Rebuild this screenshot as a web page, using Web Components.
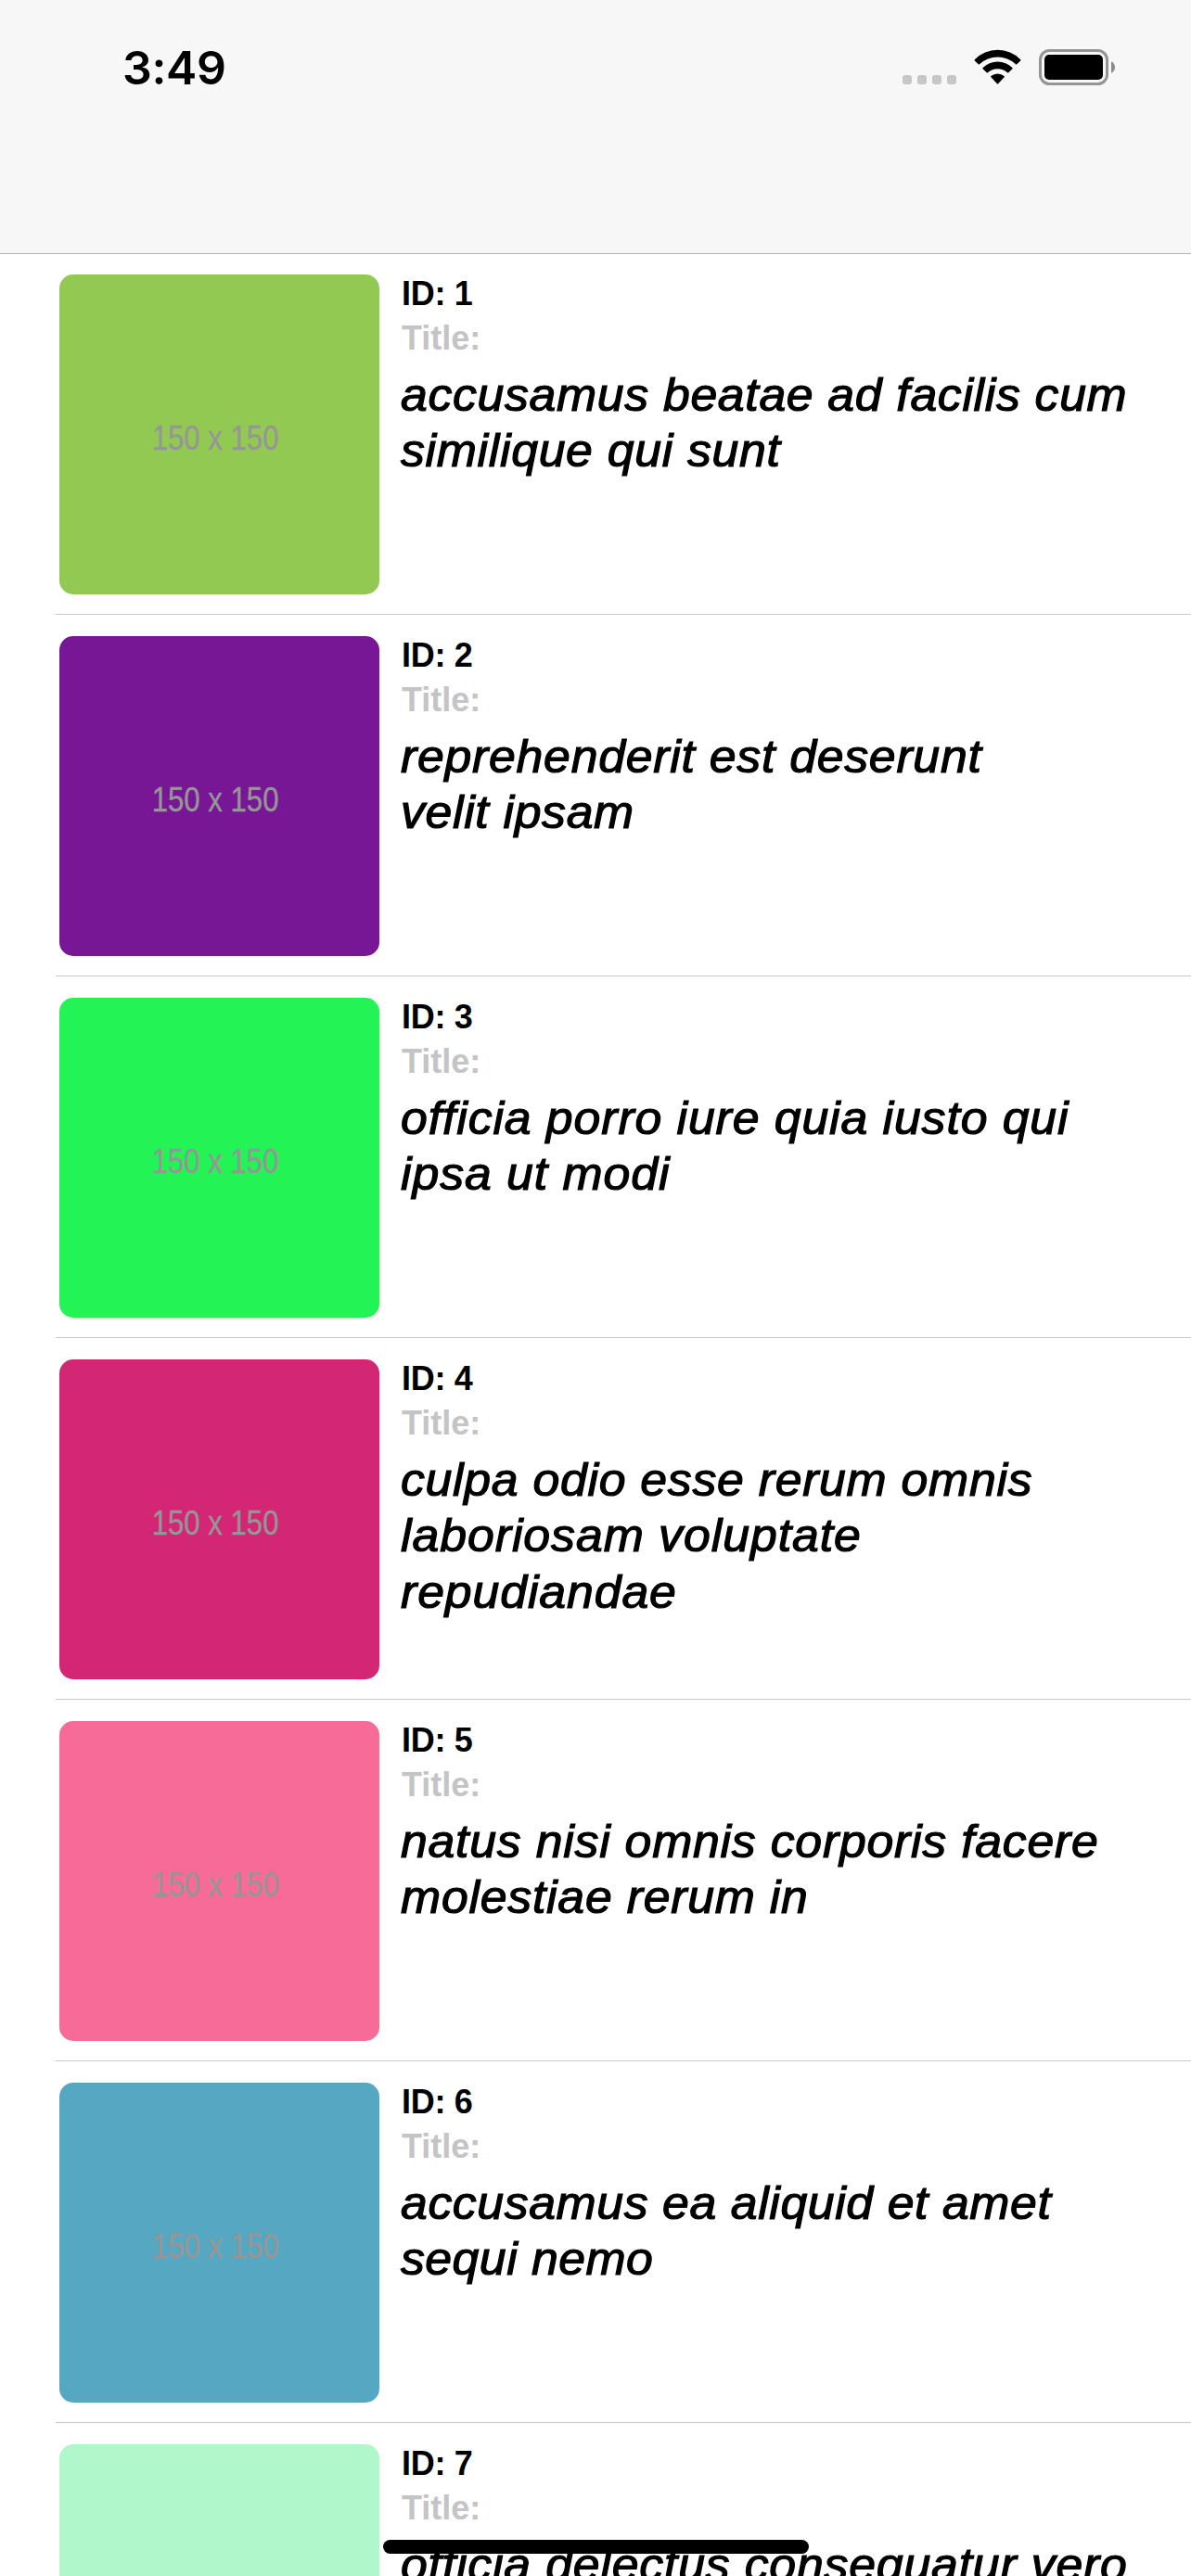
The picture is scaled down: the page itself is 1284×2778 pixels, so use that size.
<!DOCTYPE html>
<html lang="en">
<head>
<meta charset="utf-8">
<title>Photos</title>
<style>
html,body{margin:0;padding:0;background:#fff}
body{width:1284px;height:2778px;overflow:hidden}
</style>
</head>
<body>
<photo-app></photo-app>
<script>
const ctx = document.createElement('canvas').getContext('2d');

/* One line of text whose ink spans from the line's origin to `span` pixels.
   `stretch` widens the glyphs before the rest is made up with letter spacing. */
class FitLine extends HTMLElement {
  connectedCallback() {
    const root = this.attachShadow({mode: 'open'});
    root.innerHTML = `<style>:host{display:block;white-space:nowrap;transform-origin:0 0;font-kerning:normal;font-variant-ligatures:no-common-ligatures}</style><slot></slot>`;
    const text = this.textContent, cs = getComputedStyle(this);
    const stretch = +(this.getAttribute('stretch') || 1);
    ctx.font = `${cs.fontStyle} ${cs.fontWeight} ${cs.fontSize} ${cs.fontFamily}`;
    const right = ctx.measureText(text).actualBoundingBoxRight;
    this.style.letterSpacing = ((this.getAttribute('span') / stretch - right) / (text.length - 1)).toFixed(3) + 'px';
    if (stretch !== 1) this.style.transform = `scaleX(${stretch})`;
  }
}
customElements.define('fit-line', FitLine);

class SignalDots extends HTMLElement {
  connectedCallback() {
    this.attachShadow({mode: 'open'}).innerHTML = `<style>
      :host{display:flex;gap:6px;margin-top:28px}
      i{width:10px;height:10px;border-radius:3px;background:#c6c6c6}
    </style><i></i><i></i><i></i><i></i>`;
  }
}
customElements.define('signal-dots', SignalDots);

class WifiIcon extends HTMLElement {
  connectedCallback() {
    this.attachShadow({mode: 'open'}).innerHTML = `<style>:host,svg{display:block}</style>
    <svg width="51" height="39" viewBox="0 0 51 39">
      <path d="M.8 11.2A34.5 34.5 0 0 1 50.2 11.2Q50.8 11.8 50.2 12.4L46.2 16.3Q45.6 16.9 45 16.3A28.6 28.6 0 0 0 6 16.3Q5.4 16.9 4.8 16.3L.8 12.4Q.2 11.8 .8 11.2Z"/>
      <path d="M9.6 20A23 23 0 0 1 41.4 20Q42 20.6 41.4 21.2L37.3 25.2Q36.7 25.8 36.1 25.2A16.2 16.2 0 0 0 14.9 25.2Q14.3 25.8 13.7 25.2L9.6 21.2Q9 20.6 9.6 20Z"/>
      <path d="M18.4 29.1A11 11 0 0 1 32.6 29.1Q33.2 29.7 32.6 30.3L26.1 37.3Q25.5 37.9 24.9 37.3L18.4 30.3Q17.8 29.7 18.4 29.1Z"/>
    </svg>`;
  }
}
customElements.define('wifi-icon', WifiIcon);

class BatteryIcon extends HTMLElement {
  connectedCallback() {
    this.attachShadow({mode: 'open'}).innerHTML = `<style>:host,svg{display:block}</style>
    <svg width="82" height="39" viewBox="0 0 82 39">
      <rect x="1.5" y="1.5" width="72" height="36" rx="10" fill="none" stroke="#949494" stroke-width="3"/>
      <rect x="6" y="6" width="63" height="27" rx="5"/>
      <path d="M78 13.2C80.5 14.2 82 16.7 82 19.5S80.5 24.8 78 25.8Z" fill="#8a8a8a"/>
    </svg>`;
  }
}
customElements.define('battery-icon', BatteryIcon);

class StatusHeader extends HTMLElement {
  connectedCallback() {
    this.attachShadow({mode: 'open'}).innerHTML = `<style>
      :host{display:flex;box-sizing:border-box;justify-content:space-between;align-items:flex-start;height:273px;padding:53px 82px 0 132px;background:#f7f7f7;box-shadow:0 1px 0 #b2b2b2}
      fit-line{font:560 50px/60px Inter,sans-serif;margin-top:-10px}
      .icons{display:flex;align-items:flex-start}
      wifi-icon{margin-left:19px}
      battery-icon{margin-left:19px}
    </style>
    <fit-line span="110">3:49</fit-line>
    <div class="icons"><signal-dots></signal-dots><wifi-icon></wifi-icon><battery-icon></battery-icon></div>`;
  }
}
customElements.define('status-header', StatusHeader);

class PhotoThumb extends HTMLElement {
  connectedCallback() {
    this.attachShadow({mode: 'open'}).innerHTML = `<style>
      :host{display:flex;box-sizing:border-box;align-items:center;justify-content:center;flex:none;width:345px;height:345px;border-radius:15px;padding:9px 8px 0 0;background:${this.getAttribute('color')}}
      span{font:36px/44px "Liberation Sans",sans-serif;color:#969696;-webkit-text-stroke:.4px #969696;white-space:nowrap;transform:scaleX(.865)}
    </style><span>150 x 150</span>`;
  }
}
customElements.define('photo-thumb', PhotoThumb);

class PhotoRow extends HTMLElement {
  connectedCallback() {
    this.attachShadow({mode: 'open'}).innerHTML = `<style>
      :host{display:flex;box-sizing:border-box;height:390px;margin-left:60px;padding:23px 0 0 4px;border-bottom:1px solid #c6c6c8}
      .info{margin:-3px 0 0 23px;font:bold 36px/48px "Liberation Sans",Arial,sans-serif;color:#000}
      .id,.label{padding-left:1px}
      .id{letter-spacing:-.3px}
      .label{color:#c4c4c6}
      .title{margin-top:7px}
    </style>
    <photo-thumb color="${this.getAttribute('color')}"></photo-thumb>
    <div class="info"><div class="id">ID: ${this.getAttribute('number')}</div><div class="label">Title:</div><div class="title"><slot></slot></div></div>`;
  }
}
customElements.define('photo-row', PhotoRow);

class HomeIndicator extends HTMLElement {
  connectedCallback() {
    this.attachShadow({mode: 'open'}).innerHTML = `<style>:host{position:absolute;left:413px;top:2739px;width:459px;height:15px;border-radius:8px;background:#000}</style>`;
  }
}
customElements.define('home-indicator', HomeIndicator);

const photos = [
  ['#92c952', [['accusamus beatae ad facilis cum', 781], ['similique qui sunt', 411]]],
  ['#771796', [['reprehenderit est deserunt', 628], ['velit ipsam', 249.5]]],
  ['#24f355', [['officia porro iure quia iusto qui', 721.5], ['ipsa ut modi', 291.5]]],
  ['#d32776', [['culpa odio esse rerum omnis', 679.5], ['laboriosam voluptate', 494], ['repudiandae', 295]]],
  ['#f66b97', [['natus nisi omnis corporis facere', 750], ['molestiae rerum in', 437]]],
  ['#56a8c2', [['accusamus ea aliquid et amet', 703], ['sequi nemo', 271]]],
  ['#b0f7cc', [['officia delectus consequatur vero', 782]]]
];

class PhotoApp extends HTMLElement {
  connectedCallback() {
    this.attachShadow({mode: 'open'}).innerHTML = `<style>
      :host{display:block;position:relative;width:1284px;height:2778px;overflow:hidden;background:#fff}
      fit-line{font:italic 50px/60.4px "Liberation Sans",Arial,sans-serif;-webkit-text-stroke:1.2px #000}
    </style>
    <status-header></status-header>
    <main>${photos.map(([color, lines], i) => `<photo-row number="${i + 1}" color="${color}">${lines.map(([t, w]) => `<fit-line stretch="1.035" span="${w}">${t}</fit-line>`).join('')}</photo-row>`).join('')}</main>
    <home-indicator></home-indicator>`;
  }
}
customElements.define('photo-app', PhotoApp);
</script>
</body>
</html>
